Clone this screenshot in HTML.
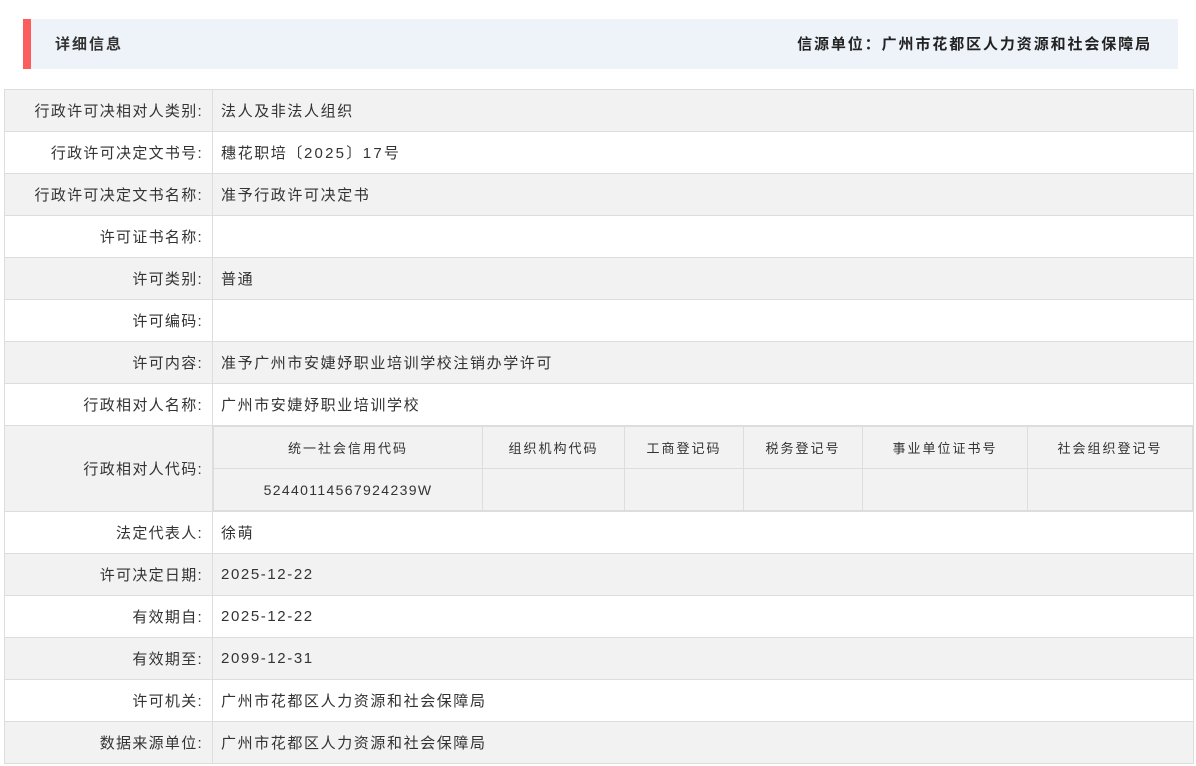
<!DOCTYPE html>
<html><head><meta charset="utf-8"><style>
*{margin:0;padding:0;box-sizing:border-box}
body{width:1196px;height:766px;background:#fff;font-family:"Liberation Sans","Noto Sans CJK SC",sans-serif;color:#333;font-size:15px;position:relative;overflow:hidden}
.hd{position:absolute;left:23px;top:19px;width:1155px;height:50px;background:#eef3fa;border-left:8px solid #fb5d5d}
.hd .l{position:absolute;left:24px;top:14px;font-size:15px;font-weight:bold;color:#333;letter-spacing:2px}
.hd .r{position:absolute;right:26px;top:14px;font-size:15px;font-weight:bold;color:#222;letter-spacing:1.9px}
table.m{position:absolute;left:4px;top:89px;width:1190px;border-collapse:collapse}
table.m>tbody>tr>td{border:1px solid #ddd;height:42px;vertical-align:middle}
table.m>tbody>tr:nth-child(odd)>td{background:#f2f2f2}
td.k{width:208px;text-align:right;padding-right:9px;letter-spacing:1.3px}
td.v{padding-left:8px;letter-spacing:1.6px}
.n{letter-spacing:2.2px}
table.s{width:100%;border-collapse:collapse;font-size:13px}
table.s td{border:1px solid #ddd;height:42px;text-align:center;background:#f2f2f2;letter-spacing:2px}
</style></head><body>
<div class="hd"><span class="l">详细信息</span><span class="r">信源单位：广州市花都区人力资源和社会保障局</span></div>
<table class="m"><tbody>
<tr><td class="k">行政许可决相对人类别:</td><td class="v">法人及非法人组织</td></tr>
<tr><td class="k">行政许可决定文书号:</td><td class="v">穗花职培〔<span class="n">2025</span>〕<span class="n">17</span>号</td></tr>
<tr><td class="k">行政许可决定文书名称:</td><td class="v">准予行政许可决定书</td></tr>
<tr><td class="k">许可证书名称:</td><td class="v"></td></tr>
<tr><td class="k">许可类别:</td><td class="v">普通</td></tr>
<tr><td class="k">许可编码:</td><td class="v"></td></tr>
<tr><td class="k">许可内容:</td><td class="v">准予广州市安婕妤职业培训学校注销办学许可</td></tr>
<tr><td class="k">行政相对人名称:</td><td class="v">广州市安婕妤职业培训学校</td></tr>
<tr><td class="k" style="height:86px">行政相对人代码:</td><td style="padding:0;background:#fff">
<table class="s"><tr><td style="width:269px">统一社会信用代码</td><td style="width:142px">组织机构代码</td><td style="width:119px">工商登记码</td><td style="width:119px">税务登记号</td><td style="width:165px">事业单位证书号</td><td>社会组织登记号</td></tr>
<tr><td style="font-size:14px;letter-spacing:1.35px">52440114567924239W</td><td></td><td></td><td></td><td></td><td></td></tr></table>
</td></tr>
<tr><td class="k">法定代表人:</td><td class="v">徐萌</td></tr>
<tr><td class="k">许可决定日期:</td><td class="v n">2025-12-22</td></tr>
<tr><td class="k">有效期自:</td><td class="v n">2025-12-22</td></tr>
<tr><td class="k">有效期至:</td><td class="v n">2099-12-31</td></tr>
<tr><td class="k">许可机关:</td><td class="v">广州市花都区人力资源和社会保障局</td></tr>
<tr><td class="k">数据来源单位:</td><td class="v">广州市花都区人力资源和社会保障局</td></tr>
</tbody></table>
</body></html>
